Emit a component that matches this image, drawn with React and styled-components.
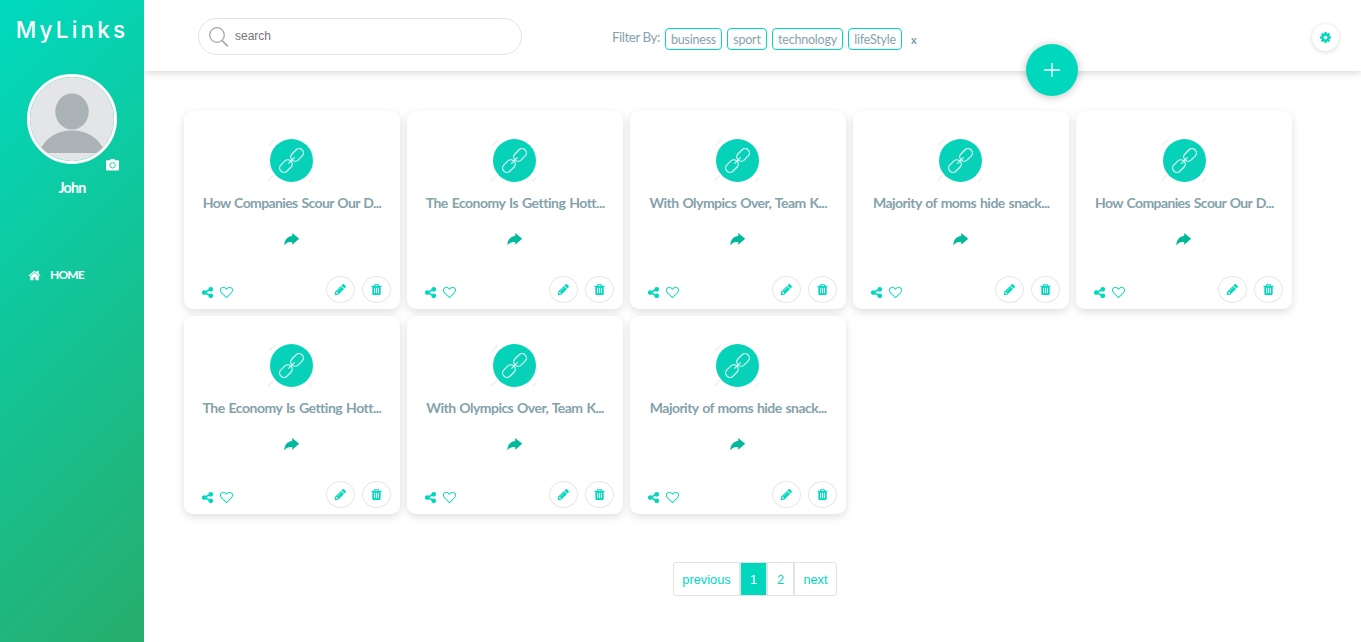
import React from 'react';
import styled, { createGlobalStyle } from 'styled-components';

const TEAL = '#00d8be';

const GlobalStyle = createGlobalStyle`
  *, *::before, *::after { box-sizing: border-box; }
  body { margin: 0; background: #fff; font-family: Lato, "Liberation Sans", sans-serif; }
  button { font: inherit; padding: 0; cursor: pointer; }
`;

const Page = styled.div`
  display: flex;
  height: 642px;
  overflow: hidden;
`;

const Sidebar = styled.aside`
  position: relative;
  z-index: 1;
  flex: none;
  width: 144px;
  display: flex;
  flex-direction: column;
  align-items: center;
  color: #fff;
  background: linear-gradient(135deg, #00dabf, #27ad6c);
`;

const Brand = styled.h1`
  margin: 13px 0 0;
  height: 35px;
  font: 500 22.5px/34px Inter, sans-serif;
  letter-spacing: 3.2px;
  white-space: nowrap;
`;

const AvatarFrame = styled.div`
  position: relative;
  margin-top: 26px;
  width: 90px;
  height: 90px;
  border: 3px solid #fff;
  border-radius: 50%;
`;

const AvatarPicture = styled.svg`
  display: block;
  width: 84px;
  height: 84px;
  border-radius: 50%;
`;

const CameraBadge = styled.svg`
  position: absolute;
  right: -5px;
  bottom: -10px;
  width: 13px;
  height: 12px;
`;

const UserName = styled.div`
  margin-top: 14px;
  font-size: 14.2px;
  font-weight: 700;
  line-height: 19px;
  letter-spacing: -0.7px;
`;

const NavLink = styled.a`
  align-self: flex-start;
  display: flex;
  align-items: center;
  gap: 9px;
  margin: 69px 0 0 28px;
  font-size: 12px;
  font-weight: 700;
  line-height: 18px;
  letter-spacing: -0.85px;
`;

const Main = styled.div`
  flex: 1;
  min-width: 0;
  display: flex;
  flex-direction: column;
`;

const Topbar = styled.header`
  position: relative;
  display: flex;
  align-items: flex-start;
  height: 71px;
  padding: 18px 22px 0 54px;
  background: #fff;
  box-shadow: 0 2px 8px rgba(0, 0, 0, 0.16);
`;

const SearchBox = styled.label`
  display: flex;
  align-items: center;
  width: 324px;
  height: 37px;
  padding-left: 10px;
  gap: 6px;
  border: 1px solid #e3e3e3;
  border-radius: 19px;
`;

const SearchInput = styled.input`
  flex: 1;
  min-width: 0;
  margin-top: -2px;
  padding: 0;
  border: 0;
  outline: 0;
  background: none;
  font: 12px "Liberation Sans", Arial, sans-serif;
  &::placeholder { color: #757575; opacity: 1; }
`;

const Filters = styled.div`
  display: flex;
  gap: 5px;
  margin: 10px 0 0 90px;
  color: #86a3ad;
`;

const FilterLabel = styled.span`
  width: 48px;
  font-size: 13.5px;
  line-height: 19px;
  letter-spacing: -0.5px;
  white-space: nowrap;
`;

const FilterTag = styled.button`
  display: flex;
  justify-content: center;
  width: ${(p) => p.$width}px;
  height: 22px;
  border: 1px solid ${TEAL};
  border-radius: 4px;
  background: none;
  color: inherit;
  font-size: 12.5px;
  line-height: 21px;
  letter-spacing: -0.2px;
`;

const ClearFilters = styled.button`
  margin-left: 4px;
  border: 0;
  background: none;
  color: #7d9ba6;
  font-size: 11px;
  font-weight: 700;
  line-height: 24px;
  height: 24px;
`;

const SettingsButton = styled.button`
  display: grid;
  place-items: center;
  width: 27px;
  height: 27px;
  margin: 6px 0 0 auto;
  border: 0;
  border-radius: 50%;
  background: #fff;
  color: ${TEAL};
  box-shadow: 0 1px 5px rgba(0, 0, 0, 0.16);
`;

const AddButton = styled.button`
  position: absolute;
  left: 882px;
  top: 44px;
  display: grid;
  place-items: center;
  width: 52px;
  height: 52px;
  border: 0;
  border-radius: 50%;
  background: ${TEAL};
  box-shadow: 0 1px 9px rgba(0, 0, 0, 0.24);
`;

const CardGrid = styled.main`
  display: grid;
  grid-template-columns: repeat(5, 216px);
  gap: 7px 7.1px;
  padding: 40px 0 0 40px;
`;

const CardBox = styled.article`
  display: flex;
  flex-direction: column;
  align-items: center;
  height: 198px;
  padding-top: 28px;
  border-radius: 9px;
  background: #fff;
  box-shadow: 0 3px 8px rgba(0, 0, 0, 0.13);
`;

const LinkBadge = styled.svg`
  flex: none;
  width: 47px;
  height: 43px;
  margin-right: 0.6px;
`;

const CardTitle = styled.h2`
  margin: 11px 0 0;
  height: 20px;
  font-size: 14px;
  font-weight: 700;
  line-height: 20px;
  letter-spacing: ${(p) => p.$tracking}px;
  word-spacing: 1px;
  color: #84a2ab;
  white-space: nowrap;
`;

const OpenArrow = styled.svg`
  flex: none;
  width: 16px;
  height: 13px;
  margin-top: 20px;
  margin-right: 1px;
`;

const CardFooter = styled.footer`
  display: flex;
  align-items: flex-start;
  align-self: stretch;
  margin-top: 30px;
  padding: 0 9px 0 17px;
  color: ${TEAL};
`;

const SocialIcons = styled.div`
  display: flex;
  align-items: center;
  gap: 6px;
  margin: 10px auto 0 0;
`;

const RoundButton = styled.button`
  display: grid;
  place-items: center;
  width: 29px;
  height: 27px;
  margin-left: 7px;
  border: 1px solid #e7e7e7;
  border-radius: 50%;
  background: #fff;
  color: inherit;
`;

const Icon = styled.svg`
  display: block;
  width: ${(p) => p.$size}px;
  height: ${(p) => p.$size}px;
  fill: currentColor;
`;

const Pager = styled.nav`
  display: flex;
  margin: 48px 0 0 529px;
  font: 12.8px "Liberation Sans", Arial, sans-serif;
`;

const PageButton = styled.button`
  width: ${(p) => p.$width}px;
  height: 34px;
  border: 1px solid #e2e2e2;
  background: ${(p) => (p.$active ? TEAL : '#fff')};
  color: ${(p) => (p.$active ? '#fff' : TEAL)};
  &:first-child { border-radius: 3px 0 0 3px; }
  &:last-child { border-radius: 0 3px 3px 0; }
`;

const paths = {
  trash:
    'M704 1376v-704q0-14-9-23t-23-9h-64q-14 0-23 9t-9 23v704q0 14 9 23t23 9h64q14 0 23-9t9-23zm256 0v-704q0-14-9-23t-23-9h-64q-14 0-23 9t-9 23v704q0 14 9 23t23 9h64q14 0 23-9t9-23zm256 0v-704q0-14-9-23t-23-9h-64q-14 0-23 9t-9 23v704q0 14 9 23t23 9h64q14 0 23-9t9-23zm-544-992h448l-48-117q-7-9-17-11h-317q-10 2-17 11zm928 32v64q0 14-9 23t-23 9h-96v948q0 83-47 143.5t-113 60.5h-832q-66 0-113-58.5t-47-141.5v-952h-96q-14 0-23-9t-9-23v-64q0-14 9-23t23-9h309l70-167q15-37 54-63t79-26h320q40 0 79 26t54 63l70 167h309q14 0 23 9t9 23z',
  pencil:
    'M491 1536l91-91-235-235-91 91v107h128v128h107zm523-928q0-22-22-22-10 0-17 7l-542 542q-7 7-7 17 0 22 22 22 10 0 17-7l542-542q7-7 7-17zm-54-192l416 416-832 832h-416v-416zm683 96q0 53-37 90l-166 166-416-416 166-165q36-38 90-38 53 0 91 38l235 234q37 39 37 91z',
  share:
    'M1344 1024q133 0 226.5 93.5t93.5 226.5-93.5 226.5-226.5 93.5-226.5-93.5-93.5-226.5q0-12 2-34l-360-180q-92 86-218 86-133 0-226.5-93.5t-93.5-226.5 93.5-226.5 226.5-93.5q126 0 218 86l360-180q-2-22-2-34 0-133 93.5-226.5t226.5-93.5 226.5 93.5 93.5 226.5-93.5 226.5-226.5 93.5q-126 0-218-86l-360 180q2 22 2 34t-2 34l360 180q92-86 218-86z',
  heart:
    'M1664 596q0-81-21.5-143t-55-98.5-81.5-59.5-94-31-98-8-112 25.5-110.5 64-86.5 72-60 61.5q-18 22-49 22t-49-22q-24-28-60-61.5t-86.5-72-110.5-64-112-25.5-98 8-94 31-81.5 59.5-55 98.5-21.5 143q0 168 187 355l581 560 580-559q188-188 188-356zm128 0q0 221-229 450l-623 600q-18 18-44 18t-44-18l-624-602q-10-8-27.5-26t-55.5-65.5-68-97.5-53.5-121-23.5-138q0-220 127-344t351-124q62 0 126.5 21.5t120 58 95.5 68.5 76 68q36-36 76-68t95.5-68.5 120-58 126.5-21.5q224 0 351 124t127 344z',
  home:
    'M1472 992v480q0 26-19 45t-45 19h-384v-384h-256v384h-384q-26 0-45-19t-19-45v-480q0-1 .5-3t.5-3l575-474 575 474q1 2 1 6zm223-69l-62 74q-8 9-21 11h-3q-13 0-21-7l-692-577-692 577q-12 8-24 7-13-2-21-11l-62-74q-8-10-7-23.5t11-21.5l719-599q32-26 76-26t76 26l244 204v-195q0-14 9-23t23-9h192q14 0 23 9t9 23v408l219 182q10 8 11 21.5t-7 23.5z',
  cog:
    'M1152 896q0-106-75-181t-181-75-181 75-75 181 75 181 181 75 181-75 75-181zm512-109v222q0 12-8 23t-20 13l-185 28q-19 54-39 91 35 50 107 138 10 12 10 25t-9 23q-27 37-99 108t-94 71q-12 0-26-9l-138-108q-44 23-91 38-16 136-29 186-7 28-36 28h-222q-14 0-24.5-8.5t-11.5-21.5l-28-184q-49-16-90-37l-141 107q-10 9-25 9-14 0-25-11-126-114-165-168-7-10-7-23 0-12 8-23 15-21 51-66.5t54-70.5q-27-50-41-99l-183-27q-13-2-21-12.5t-8-23.5v-222q0-12 8-23t19-13l186-28q14-46 39-92-40-57-107-138-10-12-10-24 0-10 9-23 26-36 98.5-107.5t94.5-71.5q13 0 26 10l138 107q44-23 91-38 16-136 29-186 7-28 36-28h222q14 0 24.5 8.5t11.5 21.5l28 184q49 16 90 37l142-107q9-9 24-9 13 0 25 10 129 119 165 170 7 8 7 22 0 12-8 23-15 21-51 66.5t-54 70.5q26 50 41 98l183 28q13 2 21 12.5t8 23.5z',
};

const Glyph = ({ name, size }) => (
  <Icon viewBox="0 0 1792 1792" $size={size}>
    <path d={paths[name]} />
  </Icon>
);

const titles = {
  companies: { text: 'How Companies Scour Our D...', tracking: -0.61 },
  economy: { text: 'The Economy Is Getting Hott...', tracking: -0.5 },
  olympics: { text: 'With Olympics Over, Team K...', tracking: -0.54 },
  moms: { text: 'Majority of moms hide snack...', tracking: -0.54 },
};

const cards = ['companies', 'economy', 'olympics', 'moms', 'companies', 'economy', 'olympics', 'moms'];

const filters = [
  { name: 'business', width: 57 },
  { name: 'sport', width: 40 },
  { name: 'technology', width: 71 },
  { name: 'lifeStyle', width: 54 },
];

function LinkCard({ title }) {
  return (
    <CardBox>
      <LinkBadge viewBox="0 0 47 43">
        <path d="M1 7 7 1M0 42l6-6M41 43l4-4" stroke="#f3f3f3" strokeWidth="2" />
        <circle cx="23.5" cy="21.5" r="21.5" fill="#04d2b9" />
        <path d="M5 32 32 5M17 40 42 15M25 41 43 23" stroke="#1ccab5" strokeWidth="1.6" opacity=".7" />
        <g fill="none" stroke="#dcfaf5" strokeWidth="1.25" transform="rotate(-45 23.5 21.5)">
          <rect x="8.6" y="17.2" width="14" height="8.6" rx="4" />
          <rect x="24.4" y="17.2" width="14" height="8.6" rx="4" />
          <path d="M19 21.5h9" />
        </g>
      </LinkBadge>
      <CardTitle $tracking={title.tracking}>{title.text}</CardTitle>
      <OpenArrow viewBox="0 0 16 13">
        <path d="M8.2 0 15.2 5.8 8.2 11.8V9C4.800 8.600 2.300 9.500.4 12.400.2 7.200 3.200 3.300 8.200 2.900z" fill="#00b89c" />
      </OpenArrow>
      <CardFooter>
        <SocialIcons>
          <Glyph name="share" size={13} />
          <Glyph name="heart" size={13} />
        </SocialIcons>
        <RoundButton aria-label="Edit"><Glyph name="pencil" size={13} /></RoundButton>
        <RoundButton aria-label="Delete"><Glyph name="trash" size={13} /></RoundButton>
      </CardFooter>
    </CardBox>
  );
}

export default function App() {
  return (
    <Page>
      <GlobalStyle />
      <Sidebar>
        <Brand>MyLinks</Brand>
        <AvatarFrame>
          <AvatarPicture viewBox="0 0 84 84">
            <rect width="84" height="84" fill="#e4e5e7" />
            <ellipse cx="42" cy="34.5" rx="16.7" ry="18" fill="#aab2b6" />
            <path d="M8 76C16 60 27 53.500 42 53.500S68 60 76 76z" fill="#aab2b6" />
          </AvatarPicture>
          <CameraBadge viewBox="0 0 13 12">
            <path d="M4 1.300 4.800 0h3.700l.8 1.300H12a1 1 0 0 1 1 1V10.500a1 1 0 0 1-1 1H1a1 1 0 0 1-1-1V2.300a1 1 0 0 1 1-1z" fill="#fff" />
            <circle cx="6.600" cy="6.300" r="2.700" fill="none" stroke="#22cdb0" />
          </CameraBadge>
        </AvatarFrame>
        <UserName>John</UserName>
        <NavLink><Glyph name="home" size={13} />HOME</NavLink>
      </Sidebar>
      <Main>
        <Topbar>
          <SearchBox>
            <svg width="20" height="20" viewBox="0 0 20 20" fill="none" stroke="#a6a6a6">
              <circle cx="8" cy="8" r="7.300" strokeWidth="1.300" />
              <path d="m13 13.500 5.800 5.800" strokeWidth="1.700" />
            </svg>
            <SearchInput placeholder="search" />
          </SearchBox>
          <Filters>
            <FilterLabel>Filter By:</FilterLabel>
            {filters.map((f) => (
              <FilterTag key={f.name} $width={f.width}>{f.name}</FilterTag>
            ))}
            <ClearFilters>x</ClearFilters>
          </Filters>
          <SettingsButton aria-label="Settings"><Glyph name="cog" size={13} /></SettingsButton>
          <AddButton aria-label="Add">
            <svg width="16" height="16" viewBox="0 0 16 16" stroke="#fff" strokeWidth="1.300">
              <path d="M8 1v14M0 8h16" />
            </svg>
          </AddButton>
        </Topbar>
        <CardGrid>
          {cards.map((key, i) => <LinkCard key={i} title={titles[key]} />)}
        </CardGrid>
        <Pager>
          <PageButton $width={67}>previous</PageButton>
          <PageButton $width={27} $active>1</PageButton>
          <PageButton $width={27}>2</PageButton>
          <PageButton $width={43}>next</PageButton>
        </Pager>
      </Main>
    </Page>
  );
}
